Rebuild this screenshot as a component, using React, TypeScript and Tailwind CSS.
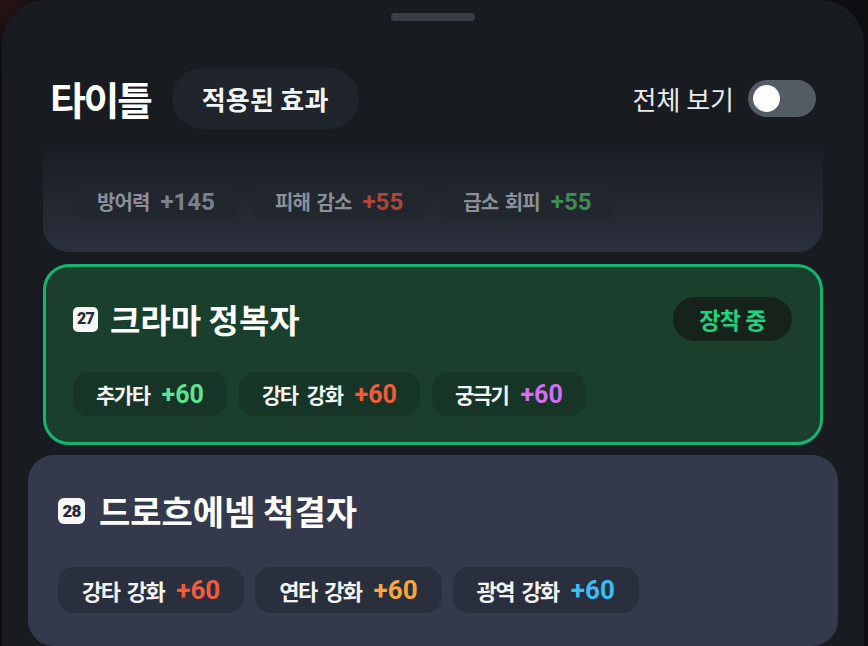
import React from "react";

const KR = "font-['Noto_Sans_CJK_KR','Noto_Sans',sans-serif]";
const NUM = "font-['Roboto','Noto_Sans_CJK_KR',sans-serif]";

type Stat = { label: string; value: string; color: string };

function Chip({ s, size }: { s: Stat; size: "sm" | "md" | "lg" }) {
  const box =
    size === "sm"
      ? "h-[38px] px-[24px] bg-[#22262f]"
      : size === "md"
      ? "h-[44px] px-[23px] bg-[#163527]"
      : "h-[46px] px-[24px] bg-[#2a2f3d]";
  const lab =
    size === "sm"
      ? "text-[20px] text-[#8a8f98] tracking-[-0.045em] [word-spacing:3px]"
      : size === "md"
      ? "text-[21px] text-[#f2f3f3] tracking-[-0.07em] [word-spacing:6px]"
      : "text-[22px] text-[#f2f3f5] tracking-[-0.07em] [word-spacing:4px]";
  const val = size === "lg" ? "text-[26px]" : size === "md" ? "text-[25px]" : "text-[24px]";
  const gap = size === "sm" ? "ml-[11px]" : "ml-[12px]";
  return (
    <div className={`shrink-0 flex items-center rounded-[16px] ${box}`}>
      <span className={`${KR} font-bold leading-none whitespace-nowrap ${lab}`}>{s.label}</span>
      <span className={`${NUM} font-bold leading-none ${gap} ${val} ${s.color}`}>{s.value}</span>
    </div>
  );
}

function Badge({ n, big }: { n: string; big?: boolean }) {
  return (
    <div
      className={`shrink-0 flex items-center justify-center bg-[#f7f7f8] ${
        big ? "w-[27px] h-[26px] rounded-[6px]" : "w-[25px] h-[25px] rounded-[5px]"
      }`}
    >
      <span
        className={`${NUM} font-black text-[#262838] ${
          big ? "text-[17px]" : "text-[16px]"
        } leading-none tracking-[-0.05em]`}
      >
        {n}
      </span>
    </div>
  );
}

export default function App() {
  return (
    <div className="w-[868px] h-[646px] overflow-hidden bg-[#0e0e11] bg-[radial-gradient(circle_at_0%_0%,#2a1311_0px,#120f11_45px,#0e0e11_90px)] pl-[2px] pr-[4px]">
      <div className="h-[646px] rounded-t-[44px] bg-[#181c21] overflow-hidden flex flex-col">
        <div className="shrink-0 mx-auto mt-[13px] w-[84px] h-[8px] rounded-full bg-[#3a3f47]" />

        {/* header */}
        <div className="shrink-0 mt-[47px] h-[61px] flex items-center pl-[48px] pr-[48px]">
          <span className={`${KR} font-bold text-[39px] tracking-[-0.06em] text-white leading-none`}>타이틀</span>
          <div className="ml-[21px] h-[61px] px-[30px] rounded-full bg-[#20252c] flex items-center">
            <span className={`${KR} font-bold text-[26px] text-[#f3f4f5] leading-none tracking-[0.01em]`}>
              적용된 효과
            </span>
          </div>
          <div className="ml-auto flex items-center">
            <span className={`${KR} font-normal text-[26px] text-[#e8eaec] leading-none`}>전체 보기</span>
            <div className="ml-[14px] w-[68px] h-[37px] rounded-full bg-[#535b64] flex items-center px-[5px]">
              <div className="w-[27px] h-[27px] rounded-full bg-white" />
            </div>
          </div>
        </div>

        {/* faded card */}
        <div className="shrink-0 mt-[11px] mx-[41px] h-[112px] rounded-b-[26px] bg-[linear-gradient(to_bottom,#181c21_0%,#1c2027_20%,#262b36_75%,#2b303d_100%)] pt-[43px] px-[30px]">
          <div className="flex gap-[12px]">
            <Chip size="sm" s={{ label: "방어력", value: "+145", color: "text-[#7b818b]" }} />
            <Chip size="sm" s={{ label: "피해 감소", value: "+55", color: "text-[#ad4637]" }} />
            <Chip size="sm" s={{ label: "급소 회피", value: "+55", color: "text-[#3e8b53]" }} />
          </div>
        </div>

        {/* active card */}
        <div className="shrink-0 mt-[12px] mx-[41px] h-[181px] rounded-[26px] border-[3px] border-[#16b473] bg-[#1a3f2d] pt-[30px] pl-[27px] pr-[28px]">
          <div className="h-[44px] flex items-center">
            <Badge n="27" />
            <span className={`${KR} font-bold text-[33px] text-white leading-none ml-[12px]`}>크라마 정복자</span>
            <div className="ml-auto h-[44px] px-[26px] rounded-full bg-[#15231b] flex items-center">
              <span className={`${KR} font-bold text-[23px] text-[#1fd282] leading-none tracking-[-0.02em]`}>장착 중</span>
            </div>
          </div>
          <div className="mt-[31px] flex gap-[12px]">
            <Chip size="md" s={{ label: "추가타", value: "+60", color: "text-[#5ee393]" }} />
            <Chip size="md" s={{ label: "강타 강화", value: "+60", color: "text-[#f35b3b]" }} />
            <Chip size="md" s={{ label: "궁극기", value: "+60", color: "text-[#d46ff2]" }} />
          </div>
        </div>

        {/* next card */}
        <div className="shrink-0 mt-[10px] mx-[26px] h-[191px] rounded-[26px] bg-[#343a4b] pt-[34px] pl-[30px] pr-[30px]">
          <div className="h-[44px] flex items-center">
            <Badge n="28" big />
            <span className={`${KR} font-bold text-[34px] text-white leading-none ml-[14px]`}>드로흐에넴 척결자</span>
          </div>
          <div className="mt-[34px] flex gap-[11px]">
            <Chip size="lg" s={{ label: "강타 강화", value: "+60", color: "text-[#f45a3c]" }} />
            <Chip size="lg" s={{ label: "연타 강화", value: "+60", color: "text-[#f9a63e]" }} />
            <Chip size="lg" s={{ label: "광역 강화", value: "+60", color: "text-[#3cbdf6]" }} />
          </div>
        </div>
      </div>
    </div>
  );
}
